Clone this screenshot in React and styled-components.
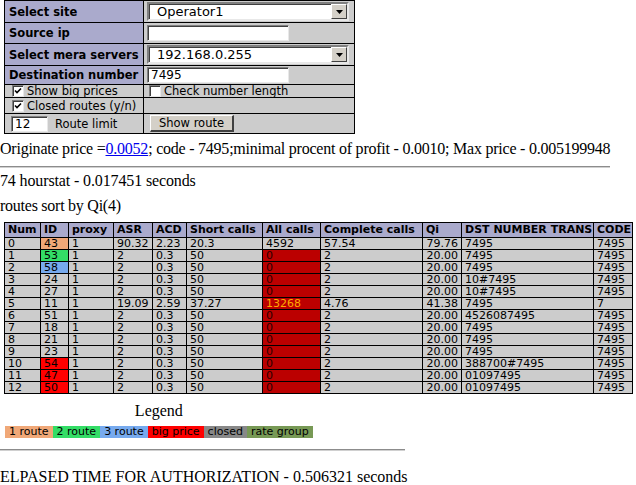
import React from "react";
import styled, { createGlobalStyle } from "styled-components";

const GlobalStyle = createGlobalStyle`
  html, body { margin: 0; padding: 0; background: #fff; }
  body {
    font-family: "Liberation Serif", "Times New Roman", serif;
    font-size: 16px;
    color: #000;
  }
`;

const Page = styled.div`
  width: 636px;
`;

const FormTable = styled.table`
  border-collapse: collapse;
  table-layout: fixed;
  width: 350px;
  margin-left: 4px;
  font-family: "DejaVu Sans", Verdana, sans-serif;
  font-size: 11.5px;
`;

const FormRow = styled.tr`
  height: ${(p) => p.$h}px;
`;

const LabelCell = styled.td`
  background: #aaaacc;
  border: 1px solid #000;
  padding: 0 4px;
  font-weight: bold;
  white-space: nowrap;
  line-height: 12px;
  overflow: hidden;
`;

const FieldCell = styled.td`
  background: #cccccc;
  border: 1px solid #000;
  padding: 0 3px;
  white-space: nowrap;
  vertical-align: middle;
  line-height: 12px;
  overflow: hidden;
`;

const Inline = styled.div`
  display: flex;
  align-items: center;
  height: 100%;
`;

const FakeSelect = styled.div`
  box-sizing: border-box;
  width: 202px;
  height: 19px;
  background: #fff;
  border-style: solid;
  border-width: 2px;
  border-color: #808080 #e8e8e8 #e8e8e8 #808080;
  box-shadow: inset 1px 1px 0 #404040;
  display: flex;
  align-items: center;
  justify-content: space-between;
  font-size: 13px;
  padding-left: 8px;
`;

const DropButton = styled.div`
  box-sizing: border-box;
  width: 16px;
  height: 15px;
  background: #d4d0c8;
  border-style: solid;
  border-width: 1px;
  border-color: #fff #404040 #404040 #fff;
  display: flex;
  align-items: center;
  justify-content: center;
`;

const TextBox = styled.div`
  box-sizing: border-box;
  width: ${(p) => p.$w}px;
  height: 16px;
  background: #fff;
  border-style: solid;
  border-width: 1px;
  border-color: #808080 #e8e8e8 #e8e8e8 #808080;
  box-shadow: inset 1px 1px 0 #404040;
  font-size: 12px;
  line-height: 14px;
  padding-left: 3px;
  margin-left: ${(p) => p.$ml || 0}px;
`;

const CheckBox = styled.span`
  box-sizing: border-box;
  display: inline-flex;
  align-items: center;
  justify-content: center;
  flex: none;
  width: 12px;
  height: 12px;
  background: #fff;
  border-style: solid;
  border-width: 1px;
  border-color: #808080 #e8e8e8 #e8e8e8 #808080;
  box-shadow: inset 1px 1px 0 #404040;
  margin: 0 3px 0 ${(p) => p.$ml}px;
`;

const CheckLabel = styled.span`
  font-size: 11.5px;
`;

const SideText = styled.span`
  margin-left: 7px;
`;

const Button = styled.div`
  box-sizing: border-box;
  width: 84px;
  height: 17px;
  margin-left: 3px;
  background: #d4d0c8;
  border-style: solid;
  border-width: 1px 2px 2px 1px;
  border-color: #fff #404040 #404040 #fff;
  font-size: 11.5px;
  display: flex;
  align-items: center;
  justify-content: center;
`;

const InfoLine = styled.div`
  line-height: 18px;
  margin-top: ${(p) => p.$mt}px;
  letter-spacing: ${(p) => p.$ls || 0}px;
  white-space: nowrap;
`;

const PriceLink = styled.a`
  color: #0000ee;
  text-decoration: underline;
`;

const Rule = styled.div`
  width: ${(p) => p.$w}px;
  height: 0;
  border-top: 1px solid #8c8c8c;
  border-bottom: 1px solid #d0d0d0;
  margin-top: ${(p) => p.$mt}px;
`;

const RoutesTable = styled.table`
  border-collapse: collapse;
  table-layout: fixed;
  width: 629px;
  margin-left: 4px;
  margin-top: 7px;
  font-family: "DejaVu Sans", Verdana, sans-serif;
  font-size: 11px;
`;

const HeadCell = styled.th`
  background: #aaaacc;
  border: 1px solid #000;
  padding: 0 3px;
  height: 14px;
  line-height: 14px;
  text-align: left;
  font-weight: bold;
  white-space: nowrap;
  overflow: hidden;
`;

const Cell = styled.td`
  background: ${(p) => p.$bg || "#cccccc"};
  color: ${(p) => p.$color || "#000"};
  text-align: ${(p) => p.$align || "left"};
  border: 1px solid #000;
  padding: 0 3px;
  height: 11px;
  line-height: 11px;
  white-space: nowrap;
  overflow: hidden;
`;

const LegendBox = styled.div`
  display: inline-block;
  margin-left: 5px;
  margin-top: 8px;
`;

const LegendCaption = styled.div`
  text-align: center;
  line-height: 18px;
`;

const LegendBar = styled.div`
  display: flex;
  margin-top: 6px;
  font-family: "DejaVu Sans", Verdana, sans-serif;
  font-size: 11px;
`;

const LegendItem = styled.span`
  background: ${(p) => p.$bg};
  padding: 0 4px;
  height: 12px;
  line-height: 12px;
  white-space: nowrap;
`;

const ORANGE = "#f0a878";
const GREEN = "#33dd66";
const BLUE = "#77aaee";
const RED = "#ff0000";
const DARKRED = "#bb0000";

const cols = [36, 28, 45, 39, 34, 76, 58, 102, 39, 132, 39];
const heads = ["Num", "ID", "proxy", "ASR", "ACD", "Short calls", "All calls", "Complete calls", "Qi", "DST NUMBER TRANS", "CODE"];

const rows = [
  ["0", "43", ORANGE, "90.32", "2.23", "20.3", "4592", "57.54", "79.76", "7495", "7495"],
  ["1", "53", GREEN, "2", "0.3", "50", "0", "2", "20.00", "7495", "7495"],
  ["2", "58", BLUE, "2", "0.3", "50", "0", "2", "20.00", "7495", "7495"],
  ["3", "24", null, "2", "0.3", "50", "0", "2", "20.00", "10#7495", "7495"],
  ["4", "27", null, "2", "0.3", "50", "0", "2", "20.00", "10#7495", "7495"],
  ["5", "11", null, "19.09", "2.59", "37.27", "13268", "4.76", "41.38", "7495", "7"],
  ["6", "51", null, "2", "0.3", "50", "0", "2", "20.00", "4526087495", "7495"],
  ["7", "18", null, "2", "0.3", "50", "0", "2", "20.00", "7495", "7495"],
  ["8", "21", null, "2", "0.3", "50", "0", "2", "20.00", "7495", "7495"],
  ["9", "23", null, "2", "0.3", "50", "0", "2", "20.00", "7495", "7495"],
  ["10", "54", RED, "2", "0.3", "50", "0", "2", "20.00", "388700#7495", "7495"],
  ["11", "47", RED, "2", "0.3", "50", "0", "2", "20.00", "01097495", "7495"],
  ["12", "50", RED, "2", "0.3", "50", "0", "2", "20.00", "01097495", "7495"],
];

const Arrow = () => (
  <svg width="7" height="4" viewBox="0 0 7 4">
    <path d="M0 0H7L3.5 4Z" fill="#000" />
  </svg>
);

const Check = () => (
  <svg width="8" height="8" viewBox="0 0 8 8">
    <path d="M1 3.5L3 5.5L7 1.5" stroke="#000" strokeWidth="1.6" fill="none" />
  </svg>
);

const Select = ({ value }) => (
  <FakeSelect>
    <span>{value}</span>
    <DropButton>
      <Arrow />
    </DropButton>
  </FakeSelect>
);

export default function App() {
  return (
    <Page>
      <GlobalStyle />
      <FormTable>
        <colgroup>
          <col style={{ width: 139 }} />
          <col style={{ width: 211 }} />
        </colgroup>
        <tbody>
          <FormRow $h={22}>
            <LabelCell>Select site</LabelCell>
            <FieldCell>
              <Select value="Operator1" />
            </FieldCell>
          </FormRow>
          <FormRow $h={21}>
            <LabelCell>Source ip</LabelCell>
            <FieldCell>
              <TextBox $w={142} />
            </FieldCell>
          </FormRow>
          <FormRow $h={22}>
            <LabelCell>Select mera servers</LabelCell>
            <FieldCell>
              <Select value="192.168.0.255" />
            </FieldCell>
          </FormRow>
          <FormRow $h={19}>
            <LabelCell>Destination number</LabelCell>
            <FieldCell>
              <TextBox $w={142}>7495</TextBox>
            </FieldCell>
          </FormRow>
          <FormRow $h={13}>
            <FieldCell>
              <Inline>
                <CheckBox $ml={4}>
                  <Check />
                </CheckBox>
                <CheckLabel>Show big prices</CheckLabel>
              </Inline>
            </FieldCell>
            <FieldCell>
              <Inline>
                <CheckBox $ml={2} />
                <CheckLabel>Check number length</CheckLabel>
              </Inline>
            </FieldCell>
          </FormRow>
          <FormRow $h={16}>
            <FieldCell>
              <Inline>
                <CheckBox $ml={4}>
                  <Check />
                </CheckBox>
                <CheckLabel>Closed routes (y/n)</CheckLabel>
              </Inline>
            </FieldCell>
            <FieldCell />
          </FormRow>
          <FormRow $h={20}>
            <FieldCell>
              <Inline>
                <TextBox $w={37} $ml={3}>12</TextBox>
                <SideText>Route limit</SideText>
              </Inline>
            </FieldCell>
            <FieldCell>
              <Inline>
                <Button>Show route</Button>
              </Inline>
            </FieldCell>
          </FormRow>
        </tbody>
      </FormTable>

      <InfoLine $mt={6} $ls={-0.23}>
        Originate price =<PriceLink href="#">0.0052</PriceLink>; code - 7495;minimal procent of profit - 0.0010; Max price - 0.005199948
      </InfoLine>
      <Rule $w={610} $mt={8} />
      <InfoLine $mt={4} $ls={-0.13}>74 hourstat - 0.017451 seconds</InfoLine>
      <InfoLine $mt={7} $ls={-0.25}>routes sort by Qi(4)</InfoLine>

      <RoutesTable>
        <colgroup>
          {cols.map((w, i) => (
            <col key={i} style={{ width: w }} />
          ))}
        </colgroup>
        <thead>
          <tr>
            {heads.map((h) => (
              <HeadCell key={h}>{h}</HeadCell>
            ))}
          </tr>
        </thead>
        <tbody>
          {rows.map((r) => {
            const allRed = r[6] !== "4592";
            return (
              <tr key={r[0]}>
                <Cell>{r[0]}</Cell>
                <Cell $bg={r[2] || undefined}>{r[1]}</Cell>
                <Cell>1</Cell>
                <Cell>{r[3]}</Cell>
                <Cell>{r[4]}</Cell>
                <Cell>{r[5]}</Cell>
                <Cell
                  $bg={allRed ? DARKRED : undefined}
                  $color={r[6] === "13268" ? "#ffaa00" : allRed ? "#2a0000" : undefined}
                >
                  {r[6]}
                </Cell>
                <Cell>{r[7]}</Cell>
                <Cell $align="right">{r[8]}</Cell>
                <Cell>{r[9]}</Cell>
                <Cell>{r[10]}</Cell>
              </tr>
            );
          })}
        </tbody>
      </RoutesTable>

      <LegendBox>
        <LegendCaption>Legend</LegendCaption>
        <LegendBar>
          <LegendItem $bg={ORANGE}>1 route</LegendItem>
          <LegendItem $bg={GREEN}>2 route</LegendItem>
          <LegendItem $bg={BLUE}>3 route</LegendItem>
          <LegendItem $bg={RED}>big price</LegendItem>
          <LegendItem $bg="#888888">closed</LegendItem>
          <LegendItem $bg="#779955">rate group</LegendItem>
        </LegendBar>
      </LegendBox>
      <Rule $w={405} $mt={10} />
      <InfoLine $mt={17}>ELPASED TIME FOR AUTHORIZATION - 0.506321 seconds</InfoLine>
    </Page>
  );
}
